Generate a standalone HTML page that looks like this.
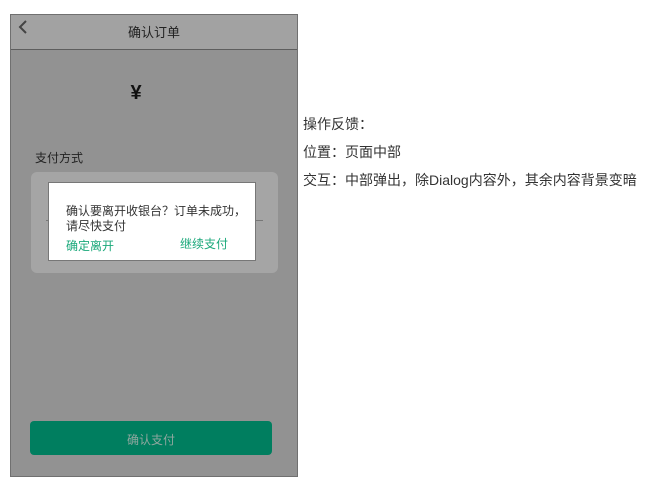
<!DOCTYPE html>
<html><head><meta charset="utf-8"><style>
body{margin:0;width:667px;height:484px;background:#fff;font-family:"Liberation Sans","Noto Sans CJK SC",sans-serif;position:relative;overflow:hidden}
.a{position:absolute}
</style></head><body>
<div class="a" style="left:10px;top:14px;width:286px;height:461px;border:1px solid #707070;background:#929292"></div>
<div class="a" style="left:11px;top:15px;width:286px;height:34px;background:#a2a2a2;border-bottom:1px solid #5e5e5e"></div>
<svg class="a" style="left:16px;top:19px" width="14" height="16"><path d="M10 2 L4 8 L10 14" stroke="#444" stroke-width="2" fill="none"/></svg>
<div class="a" style="left:11px;top:22px;width:286px;text-align:center;font-size:13px;color:#222">确认订单</div>
<div class="a" style="left:11px;top:82px;width:250px;text-align:center;font-size:20px;font-weight:bold;color:#111">¥</div>
<div class="a" style="left:35px;top:149px;font-size:12px;color:#222">支付方式</div>
<div class="a" style="left:31px;top:172px;width:247px;height:101px;background:#a5a5a5;border-radius:6px"></div>
<div class="a" style="left:46px;top:220px;width:217px;height:1px;background:#777"></div>
<div class="a" style="left:48px;top:182px;width:206px;height:77px;background:#fff;border:1px solid #777"></div>
<div class="a" style="left:66px;top:204px;font-size:12px;line-height:15px;color:#333">确认要离开收银台？订单未成功，<br>请尽快支付</div>
<div class="a" style="left:66px;top:237px;font-size:12px;color:#1aa87a">确定离开</div>
<div class="a" style="left:180px;top:235px;font-size:12px;color:#1aa87a">继续支付</div>
<div class="a" style="left:30px;top:421px;width:242px;height:34px;background:#007e5f;border-radius:4px;text-align:center;line-height:38px;font-size:12px;color:#8fa79f">确认支付</div>
<div class="a" style="left:303px;top:110px;font-size:14px;color:#333;line-height:28px;white-space:nowrap">操作反馈：<br>位置：页面中部<br>交互：中部弹出，除Dialog内容外，其余内容背景变暗</div>
</body></html>
